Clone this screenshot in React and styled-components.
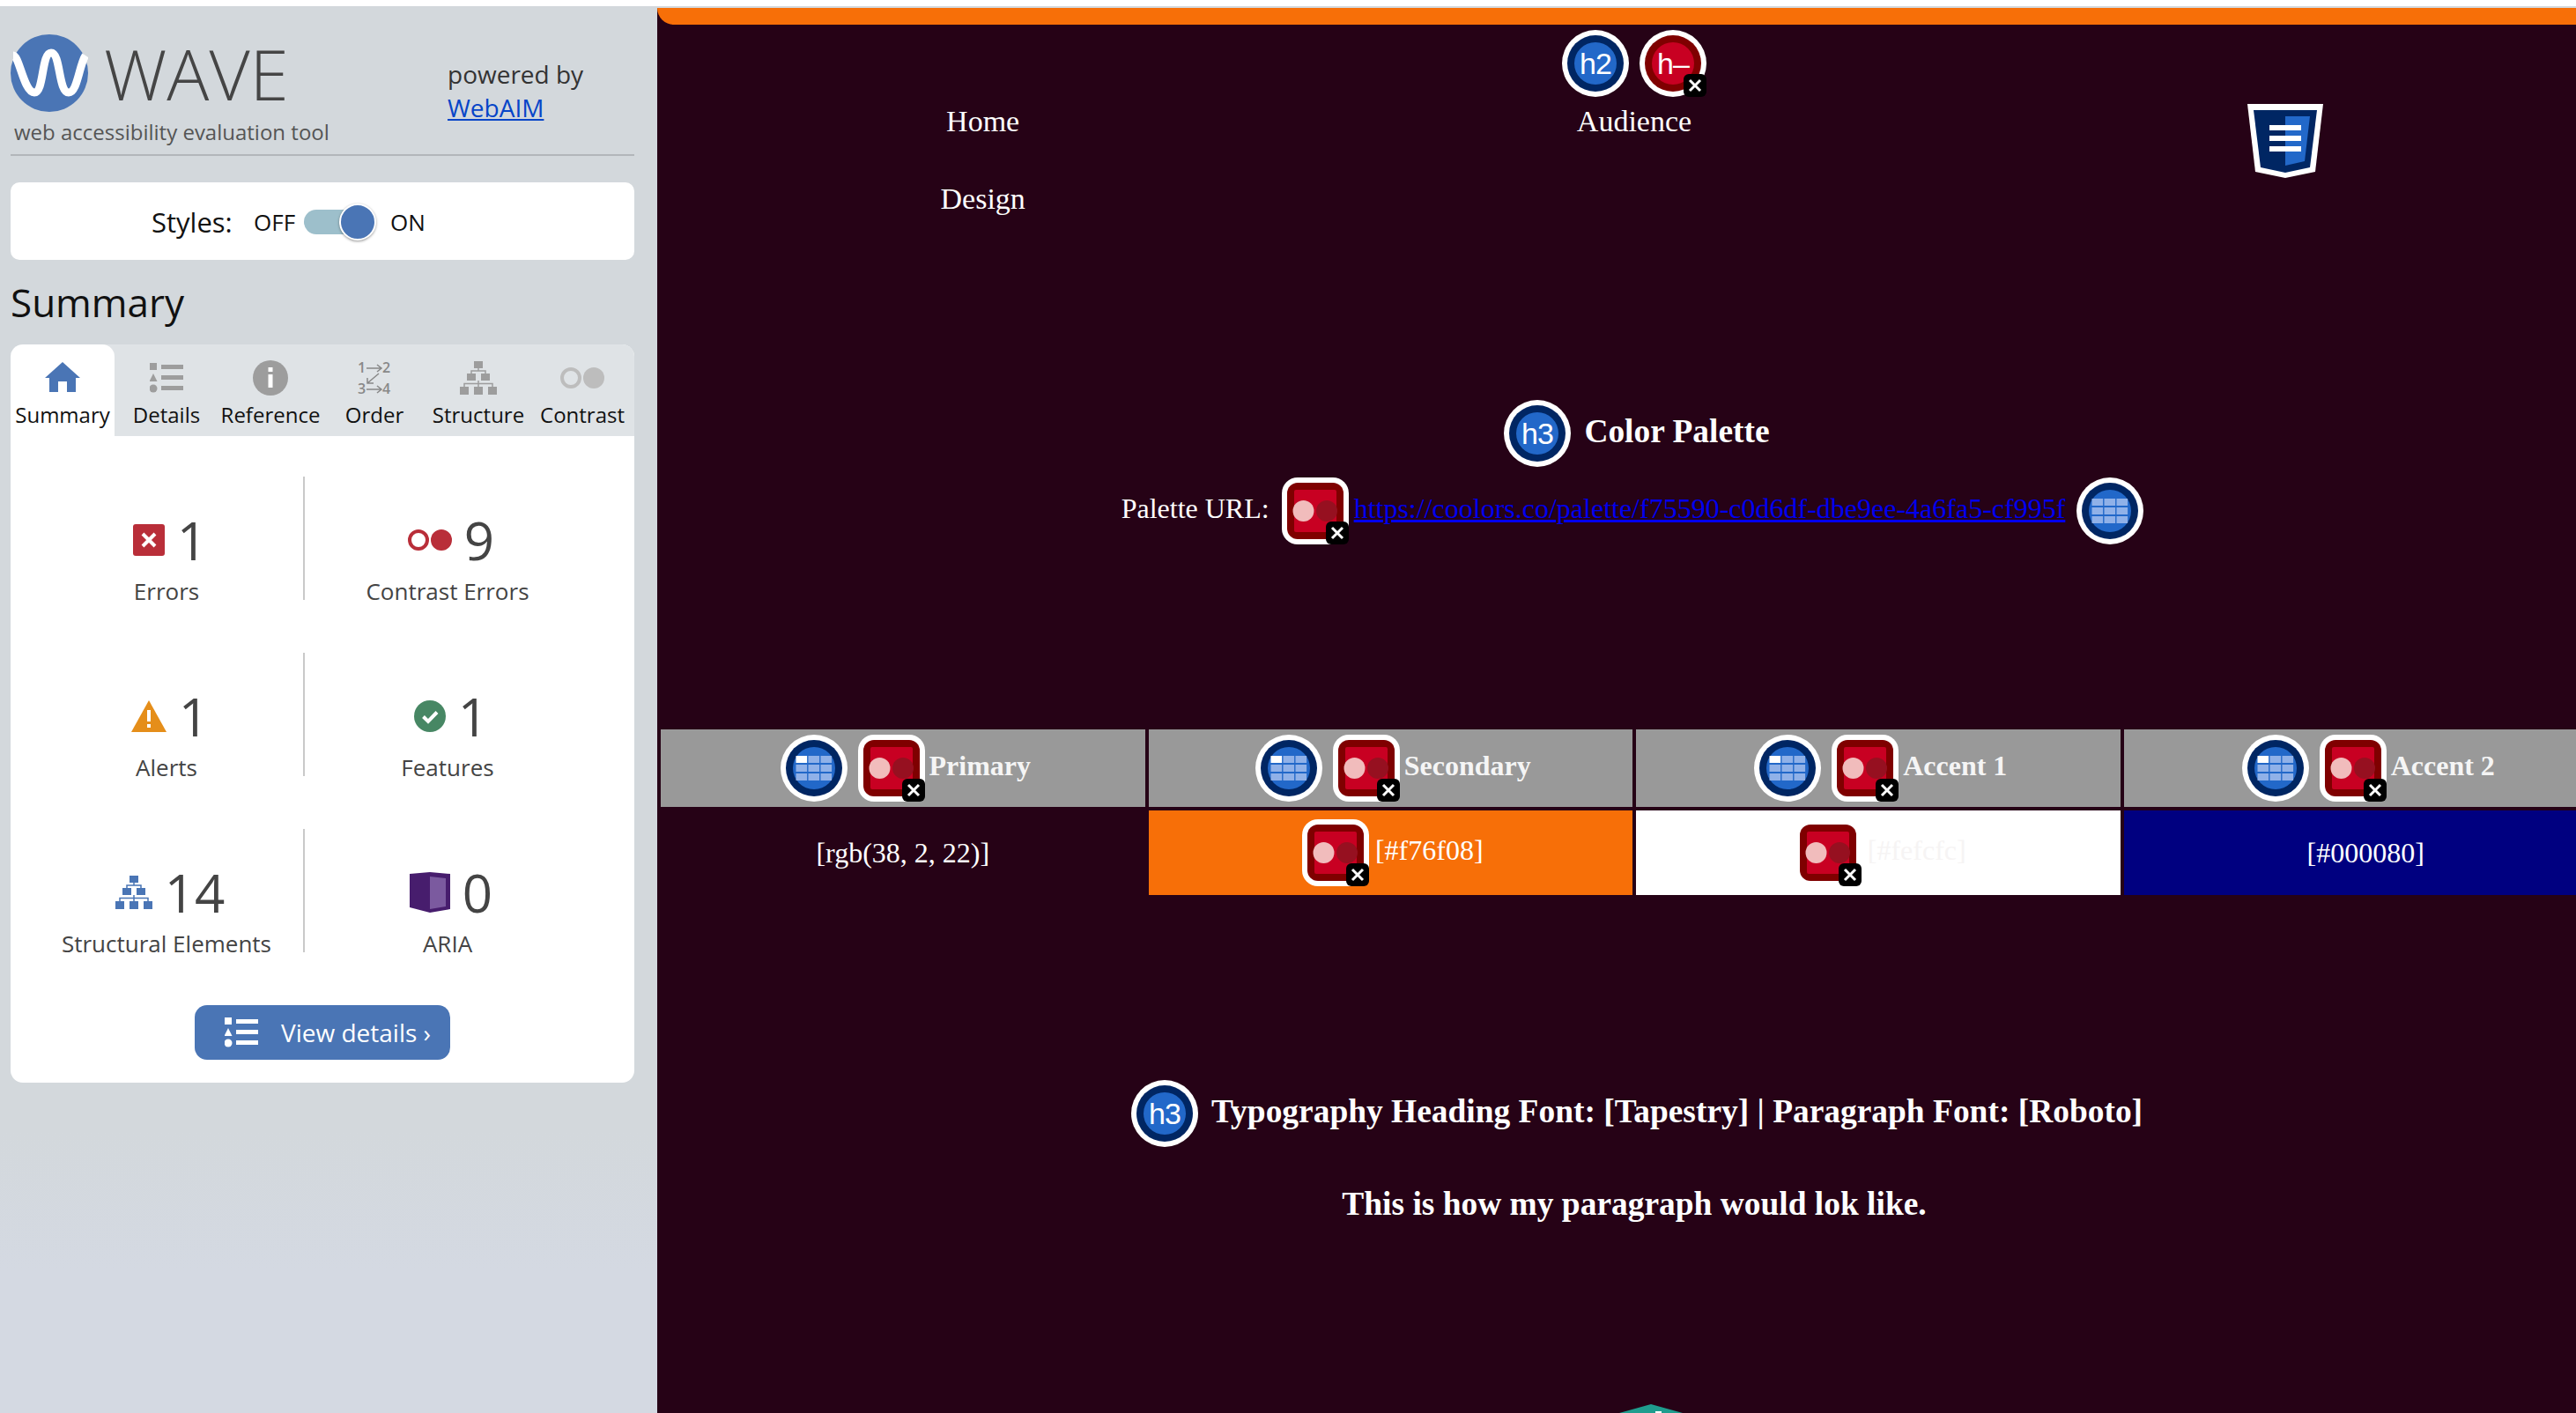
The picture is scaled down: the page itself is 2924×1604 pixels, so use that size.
import React from "react";
import styled, { createGlobalStyle } from "styled-components";

const GlobalStyle = createGlobalStyle`
  html, body {
    margin: 0;
    padding: 0;
    background: #fff;
  }
  * {
    box-sizing: border-box;
  }
`;

const Page = styled.div`
  width: 2924px;
  height: 1604px;
  overflow: hidden;
  display: flex;
  flex-direction: column;
`;

const TopStrip = styled.div`
  height: 7px;
  background: #fff;
  flex-shrink: 0;
`;

const Body = styled.div`
  flex: 1;
  display: flex;
  min-height: 0;
  background: linear-gradient(#d3d8dc 80%, #d4d9e2 90%);
`;

/* ---------- sidebar ---------- */

const Sidebar = styled.aside`
  width: 746px;
  flex-shrink: 0;
  padding: 0 26px 0 12px;
  font-family: "Open Sans", "Liberation Sans", sans-serif;
  color: #111;
`;

const Brand = styled.div`
  display: flex;
  height: 170px;
  border-bottom: 2px solid #b2b6ba;
`;

const BrandLeft = styled.div`
  width: 496px;
  padding-top: 32px;
`;

const LogoRow = styled.div`
  display: flex;
  align-items: center;
  gap: 18px;
  height: 88px;
`;

const LogoWord = styled.span`
  font-size: 80px;
  font-weight: 300;
  line-height: 88px;
  color: #454545;
`;

const Tagline = styled.div`
  font-size: 24px;
  line-height: 34px;
  color: #555;
  margin: 6px 0 0 4px;
`;

const PoweredBy = styled.div`
  padding-top: 58px;
  font-size: 28px;
  line-height: 38px;
  color: #333;
`;

const BrandLink = styled.a`
  color: #0645c8;
  text-decoration: underline;
`;

const StylesCard = styled.div`
  margin-top: 30px;
  height: 88px;
  background: #fff;
  border-radius: 10px;
  display: flex;
  align-items: center;
  padding: 2px 0 0 160px;
`;

const StylesLabel = styled.span`
  font-size: 31px;
  width: 116px;
`;

const ToggleText = styled.span`
  font-size: 26px;
`;

const ToggleTrack = styled.div`
  position: relative;
  width: 60px;
  height: 28px;
  margin: 0 38px 0 10px;
  border-radius: 14px;
  background: #9dbfcb;
`;

const ToggleThumb = styled.div`
  position: absolute;
  left: 40px;
  top: -7px;
  width: 42px;
  height: 42px;
  border-radius: 50%;
  background: #4a75b5;
  border: 2px solid #fff;
  box-shadow: 0 1px 3px rgba(0, 0, 0, 0.4);
`;

const SummaryTitle = styled.h2`
  margin: 18px 0 0;
  font-size: 44px;
  font-weight: 400;
  line-height: 60px;
  height: 67px;
`;

const Panel = styled.section`
  margin-top: 11px;
  height: 838px;
  background: #fff;
  border-radius: 14px;
  overflow: hidden;
`;

const Tabs = styled.div`
  display: grid;
  grid-template-columns: repeat(6, 118px);
  height: 104px;
  background: #dfe3e6;
`;

const Tab = styled.div`
  display: flex;
  flex-direction: column;
  align-items: center;
  padding-top: 15px;
  border-radius: 14px 14px 0 0;
  background: ${(p) => (p.$active ? "#fff" : "transparent")};
`;

const TabIcon = styled.div`
  height: 46px;
  display: flex;
  align-items: center;
  justify-content: center;
`;

const TabLabel = styled.span`
  margin-top: 2px;
  font-size: 24px;
  line-height: 34px;
  white-space: nowrap;
`;

const StatGrid = styled.div`
  display: grid;
  grid-template-columns: 312px 324px;
  grid-auto-rows: 140px;
  row-gap: 60px;
  padding: 46px 0 0 22px;
`;

const Stat = styled.div`
  display: flex;
  flex-direction: column;
  align-items: center;
  padding-top: 30px;
  color: #444;
  border-right: ${(p) => (p.$divided ? "2px solid #c9c9c9" : "none")};
`;

const StatTop = styled.div`
  display: flex;
  align-items: center;
  gap: 14px;
  height: 84px;
  padding-left: 8px;
`;

const StatNumber = styled.span`
  font-size: 60px;
  line-height: 84px;
`;

const StatLabel = styled.span`
  font-size: 26px;
  line-height: 32px;
  white-space: nowrap;
`;

const DetailsButton = styled.button`
  display: flex;
  align-items: center;
  gap: 26px;
  width: 290px;
  height: 62px;
  margin: 60px 0 0 209px;
  padding: 0 0 0 34px;
  border: none;
  border-radius: 14px;
  background: #4a75b5;
  color: #fff;
  font-family: inherit;
  font-size: 28px;
`;

/* ---------- page under test ---------- */

const Main = styled.main`
  width: 2218px;
  flex-shrink: 0;
  margin-top: 2px;
  background: #260216;
  color: #fff;
  font-family: "Liberation Serif", "Times New Roman", serif;
  font-size: 32px;
`;

const OrangeBar = styled.div`
  height: 19px;
  background: #f76f08;
  border-bottom-left-radius: 28px;
`;

const SiteNav = styled.nav`
  display: grid;
  grid-template-columns: repeat(3, 1fr);
  height: 217px;
  font-size: 34px;
  line-height: 40px;
  text-align: center;
`;

const NavList = styled.div`
  display: flex;
  flex-direction: column;
  gap: 48px;
  padding-top: 90px;
`;

const NavCenter = styled.div`
  padding-top: 6px;
`;

const NavLogo = styled.div`
  padding-top: 90px;
`;

const IconRow = styled.div`
  display: flex;
  justify-content: center;
  gap: 12px;
  margin-bottom: 8px;
`;

const Heading = styled.h3`
  display: flex;
  align-items: center;
  justify-content: center;
  gap: 15px;
  margin: ${(p) => p.$top || "0"} 0 0;
  padding-left: 6px;
  height: 76px;
  font-size: 37.44px;
  font-weight: 700;
  white-space: nowrap;
`;

/* text in the icon rows sits a little above the icons' middle */
const RaisedText = styled.span`
  margin-bottom: 6px;
`;

const UrlRow = styled.div`
  display: flex;
  align-items: center;
  justify-content: center;
  height: 76px;
  margin-top: 12px;
  padding-right: 4px;
  white-space: nowrap;
`;

const PaletteLink = styled.a`
  color: #0000ee;
  text-decoration: underline;
  margin: 0 13px 6px 6px;
`;

const UrlLabel = styled.span`
  margin: 0 14px 6px 0;
`;

const SwatchTable = styled.div`
  display: grid;
  grid-template-columns: repeat(4, 1fr);
  grid-template-rows: 88px 96px;
  gap: 4px;
  margin-top: 210px;
  padding: 0 4px;
`;

const HeadCell = styled.div`
  display: flex;
  align-items: center;
  justify-content: center;
  gap: 12px;
  padding-left: 6px;
  background: #999;
  color: #f5f5f5;
  font-weight: 700;
`;

const HeadText = styled.span`
  margin: 0 0 6px -7px;
`;

const ColorCell = styled.div`
  display: flex;
  align-items: center;
  justify-content: center;
  gap: 7px;
  padding-left: ${(p) => (p.$flagged ? "5px" : "0")};
  background: ${(p) => p.$bg};
  color: ${(p) => p.$fg || "#fff"};
`;

const Paragraph = styled.p`
  margin: 44px 0 0;
  font-size: 37.44px;
  font-weight: 700;
  line-height: 42px;
  text-align: center;
`;

const TealMark = styled.div`
  margin-top: 206px;
  padding-left: 38px;
  display: flex;
  justify-content: center;
`;

/* ---------- drawings ---------- */

const ErrorBadge = () => (
  <g>
    <rect x="50" y="50" width="26" height="26" rx="6" fill="#000" />
    <path d="M57 57 L69 69 M69 57 L57 69" stroke="#fff" strokeWidth="3" />
  </g>
);

const RoundIcon = ({ label, red }) => (
  <svg width="76" height="76" viewBox="0 0 76 76" style={{ flexShrink: 0 }}>
    <circle cx="38" cy="38" r="38" fill="#fff" />
    <circle cx="38" cy="38" r="32" fill={red ? "#7f0000" : "#002663"} />
    <circle cx="38" cy="38" r="24" fill={red ? "#c80022" : "#2268c9"} />
    <text
      x="38"
      y="50"
      textAnchor="middle"
      fill="#fff"
      fontFamily="Liberation Sans, sans-serif"
      fontSize="34"
      fontWeight="400"
      letterSpacing="-1"
    >
      {label}
    </text>
    {red && <ErrorBadge />}
  </svg>
);

const ContrastIcon = ({ bare }) => (
  <svg width="76" height="76" viewBox="0 0 76 76" style={{ flexShrink: 0 }}>
    {!bare && <rect width="76" height="76" rx="18" fill="#fff" />}
    <rect x="6" y="6" width="64" height="64" rx="12" fill="#7f0000" />
    <rect x="14" y="14" width="48" height="48" rx="2" fill="#c80022" />
    <circle cx="24.5" cy="38" r="12" fill="#f1bcbc" />
    <circle cx="51" cy="38" r="12" fill="#961020" />
    <ErrorBadge />
  </svg>
);

const GRID_CELLS = [0, 1, 2, 3, 4, 5, 6, 7, 8];

const TableIcon = ({ marked }) => (
  <svg width="76" height="76" viewBox="0 0 76 76" style={{ flexShrink: 0 }}>
    <circle cx="38" cy="38" r="38" fill="#fff" />
    <circle cx="38" cy="38" r="32" fill="#002663" />
    <circle cx="38" cy="38" r="24" fill="#2268c9" />
    {GRID_CELLS.map((i) => (
      <rect
        key={i}
        x={17.5 + (i % 3) * 14}
        y={24 + Math.floor(i / 3) * 10}
        width="12.6"
        height="8"
        fill={marked && i === 0 ? "#fff" : "#90b1e8"}
      />
    ))}
  </svg>
);

const LandmarkIcon = () => (
  <svg width="86" height="84" viewBox="0 0 86 84">
    <path d="M0 0 H86 L77 77 L43 84 L9 77 Z" fill="#fff" />
    <path d="M7 7 H79 L71 72 L43 78 L15 72 Z" fill="#002663" />
    <path d="M43 14 H71 L65 65 L43 70 Z" fill="#2268c9" />
    <rect x="25" y="24" width="36" height="6" fill="#fff" />
    <rect x="25" y="36" width="36" height="6" fill="#fff" />
    <rect x="25" y="48" width="36" height="6" fill="#fff" />
  </svg>
);

const WaveLogo = () => (
  <svg width="88" height="88" viewBox="0 0 88 88">
    <circle cx="44" cy="44" r="44" fill="#4a75b5" />
    <path
      d="M3 24 C10 24 15 66 27 66 C38 66 35 21 46 21 C57 21 54 66 66 66 C76 66 78 34 85 24"
      fill="none"
      stroke="#fff"
      strokeWidth="9"
    />
  </svg>
);

const HomeGlyph = () => (
  <svg width="40" height="36" viewBox="0 0 40 36">
    <path d="M20 0 L40 18 H35 V34 H25 V22 H15 V34 H5 V18 H0 Z" fill="#4a75b5" />
  </svg>
);

const ListGlyph = ({ color }) => (
  <svg width="38" height="34" viewBox="0 0 38 34">
    <rect x="0" y="0" width="8" height="8" fill={color} />
    <path d="M4 12 L8.5 21 H-0.5 Z" fill={color} />
    <circle cx="4" cy="29" r="4.5" fill={color} />
    <rect x="13" y="2" width="25" height="5" fill={color} />
    <rect x="13" y="14" width="25" height="5" fill={color} />
    <rect x="13" y="26" width="25" height="5" fill={color} />
  </svg>
);

const InfoGlyph = () => (
  <svg width="40" height="40" viewBox="0 0 40 40">
    <circle cx="20" cy="20" r="20" fill="#9d9d9d" />
    <rect x="17.5" y="8" width="5" height="5" fill="#fff" />
    <rect x="17.5" y="16" width="5" height="15" fill="#fff" />
  </svg>
);

const OrderGlyph = () => (
  <svg width="38" height="40" viewBox="0 0 38 40" overflow="visible">
    <g fontFamily="Open Sans, sans-serif" fontSize="16" fontWeight="600" fill="#888">
      <text x="0" y="14">1</text>
      <text x="28" y="14">2</text>
      <text x="0" y="38">3</text>
      <text x="28" y="38">4</text>
    </g>
    <g stroke="#888" strokeWidth="1.5" fill="none">
      <path d="M10 9 H27 M22 5 L27 9 L22 13" />
      <path d="M10 33 H27 M22 29 L27 33 L22 37" />
      <path d="M24 15 L11 26 M11 20 V26 H18" />
    </g>
  </svg>
);

const TreeGlyph = ({ color }) => (
  <svg width="42" height="38" viewBox="0 0 42 38">
    <g fill={color}>
      <rect x="16" y="0" width="10" height="8" />
      <rect x="8" y="14" width="10" height="8" />
      <rect x="24" y="14" width="10" height="8" />
      <rect x="0" y="29" width="10" height="9" />
      <rect x="16" y="29" width="10" height="9" />
      <rect x="32" y="29" width="10" height="9" />
    </g>
    <path
      d="M21 8 V11 M13 14 V11 H29 V14 M21 22 V29 M5 29 V25.500 H37 V29"
      stroke={color}
      strokeWidth="1.5"
      fill="none"
    />
  </svg>
);

const DotsGlyph = ({ color }) => (
  <svg width="50" height="24" viewBox="0 0 50 24">
    <circle cx="12" cy="12" r="10" fill="none" stroke={color} strokeWidth="4" />
    <circle cx="38" cy="12" r="12" fill={color} />
  </svg>
);

const ErrorGlyph = () => (
  <svg width="36" height="36" viewBox="0 0 36 36">
    <rect width="36" height="36" rx="3" fill="#b92e39" />
    <path d="M11 11 L25 25 M25 11 L11 25" stroke="#fff" strokeWidth="4" />
  </svg>
);

const AlertGlyph = () => (
  <svg width="40" height="36" viewBox="0 0 40 36">
    <path d="M20 0 L40 36 H0 Z" fill="#e58e1a" />
    <rect x="18" y="11" width="4" height="13" fill="#fff" />
    <rect x="18" y="27" width="4" height="4" fill="#fff" />
  </svg>
);

const FeatureGlyph = () => (
  <svg width="36" height="36" viewBox="0 0 36 36">
    <circle cx="18" cy="18" r="18" fill="#478764" />
    <path d="M10.500 18.500 L16 24 L26 13.500" fill="none" stroke="#fff" strokeWidth="4" />
  </svg>
);

const AriaGlyph = () => (
  <svg width="46" height="46" viewBox="0 0 46 46">
    <path d="M0 2 L23 0 L46 2 V42 L23 46 L0 40 Z" fill="#471d6d" />
    <path d="M23 5 L41 7 V39 L23 42 Z" fill="#7b5a9f" />
  </svg>
);

const TealGlyph = () => (
  <svg width="72" height="76" viewBox="0 0 72 76">
    <path d="M36 0 L72 10 V76 H0 V10 Z" fill="#1f9d8e" />
    <rect x="41" y="8" width="7" height="6" fill="#fff" />
  </svg>
);

const tabs = [
  { label: "Summary", icon: <HomeGlyph />, active: true },
  { label: "Details", icon: <ListGlyph color="#9d9d9d" /> },
  { label: "Reference", icon: <InfoGlyph /> },
  { label: "Order", icon: <OrderGlyph /> },
  { label: "Structure", icon: <TreeGlyph color="#9d9d9d" /> },
  { label: "Contrast", icon: <DotsGlyph color="#bdbdbd" /> },
];

const stats = [
  { value: 1, label: "Errors", icon: <ErrorGlyph />, divided: true },
  { value: 9, label: "Contrast Errors", icon: <DotsGlyph color="#b92e39" /> },
  { value: 1, label: "Alerts", icon: <AlertGlyph />, divided: true },
  { value: 1, label: "Features", icon: <FeatureGlyph /> },
  { value: 14, label: "Structural Elements", icon: <TreeGlyph color="#4a75b5" />, divided: true },
  { value: 0, label: "ARIA", icon: <AriaGlyph /> },
];

const swatches = [
  { head: "Primary", text: "[rgb(38, 2, 22)]", bg: "#260216" },
  { head: "Secondary", text: "[#f76f08]", bg: "#f76f08", flagged: true },
  { head: "Accent 1", text: "[#fefcfc]", bg: "#fff", fg: "#f6f4f4", flagged: true, bare: true },
  { head: "Accent 2", text: "[#000080]", bg: "#000080" },
];

const App = () => {
  return (
    <Page>
      <GlobalStyle />
      <TopStrip />
      <Body>
        <Sidebar>
          <Brand>
            <BrandLeft>
              <LogoRow>
                <WaveLogo />
                <LogoWord>WAVE</LogoWord>
              </LogoRow>
              <Tagline>web accessibility evaluation tool</Tagline>
            </BrandLeft>
            <PoweredBy>
              powered by
              <br />
              <BrandLink href="#">WebAIM</BrandLink>
            </PoweredBy>
          </Brand>

          <StylesCard>
            <StylesLabel>Styles:</StylesLabel>
            <ToggleText>OFF</ToggleText>
            <ToggleTrack>
              <ToggleThumb />
            </ToggleTrack>
            <ToggleText>ON</ToggleText>
          </StylesCard>

          <SummaryTitle>Summary</SummaryTitle>

          <Panel>
            <Tabs>
              {tabs.map((t) => (
                <Tab key={t.label} $active={t.active}>
                  <TabIcon>{t.icon}</TabIcon>
                  <TabLabel>{t.label}</TabLabel>
                </Tab>
              ))}
            </Tabs>
            <StatGrid>
              {stats.map((s) => (
                <Stat key={s.label} $divided={s.divided}>
                  <StatTop>
                    {s.icon}
                    <StatNumber>{s.value}</StatNumber>
                  </StatTop>
                  <StatLabel>{s.label}</StatLabel>
                </Stat>
              ))}
            </StatGrid>
            <DetailsButton>
              <ListGlyph color="#fff" />
              View details ›
            </DetailsButton>
          </Panel>
        </Sidebar>

        <Main>
          <OrangeBar />
          <SiteNav>
            <NavList>
              <span>Home</span>
              <span>Design</span>
            </NavList>
            <NavCenter>
              <IconRow>
                <RoundIcon label="h2" />
                <RoundIcon label="h–" red />
              </IconRow>
              <span>Audience</span>
            </NavCenter>
            <NavLogo>
              <LandmarkIcon />
            </NavLogo>
          </SiteNav>

          <Heading $top="209px">
            <RoundIcon label="h3" />
            <RaisedText>Color Palette</RaisedText>
          </Heading>
          <UrlRow>
            <UrlLabel>Palette URL:</UrlLabel>
            <ContrastIcon />
            <PaletteLink href="#">
              https://coolors.co/palette/f75590-c0d6df-dbe9ee-4a6fa5-cf995f
            </PaletteLink>
            <TableIcon />
          </UrlRow>

          <SwatchTable>
            {swatches.map((s) => (
              <HeadCell key={s.head}>
                <TableIcon marked />
                <ContrastIcon />
                <HeadText>{s.head}</HeadText>
              </HeadCell>
            ))}
            {swatches.map((s) => (
              <ColorCell key={s.text} $bg={s.bg} $fg={s.fg} $flagged={s.flagged}>
                {s.flagged && <ContrastIcon bare={s.bare} />}
                {s.flagged ? <RaisedText>{s.text}</RaisedText> : s.text}
              </ColorCell>
            ))}
          </SwatchTable>

          <Heading $top="210px">
            <RoundIcon label="h3" />
            <RaisedText>Typography Heading Font: [Tapestry] | Paragraph Font: [Roboto]</RaisedText>
          </Heading>
          <Paragraph>This is how my paragraph would lok like.</Paragraph>
          <TealMark>
            <TealGlyph />
          </TealMark>
        </Main>
      </Body>
    </Page>
  );
};

export default App;
